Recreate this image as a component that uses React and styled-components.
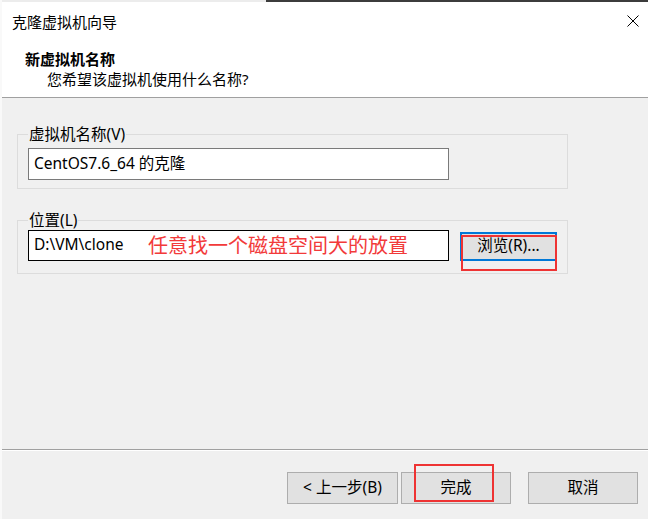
import React from 'react'
import styled, { createGlobalStyle } from 'styled-components'

const Global = createGlobalStyle`
  html, body { margin: 0; padding: 0; }
  body {
    background: #f0f0f0;
    font-family: "Noto Sans", "Noto Sans CJK SC", sans-serif;
    color: #000;
  }
`

const Win = styled.div`
  width: 648px;
  height: 519px;
  display: flex;
  flex-direction: column;
  box-sizing: border-box;
  border-left: 2px solid #f9f9f9;
  overflow: hidden;
`

const TopEdge = styled.div`
  height: 2px;
  margin-left: -2px;
  background: linear-gradient(to right, #ececec 266px, #3c3c3c 266px);
`

const Header = styled.div`
  background: #fff;
  border-bottom: 1px solid #a0a0a0;
  padding-bottom: 8px;
`

const TitleBar = styled.div`
  height: 38px;
  display: flex;
  align-items: center;
  justify-content: space-between;
  padding: 0 8px 0 10px;
  font-size: 15px;
`

const CloseBtn = styled.div`
  width: 12px;
  height: 12px;
  display: flex;
  margin-right: 1px;
`

const HeadTitle = styled.div`
  font-size: 15px;
  line-height: 20px;
  font-weight: 700;
  padding: 9px 0 0 23px;
`

const HeadSub = styled.div`
  font-size: 15px;
  line-height: 20px;
  padding-left: 45px;
`

const Body = styled.div`
  flex: 1;
  padding: 26px 0 0 15px;
  display: flex;
  flex-direction: column;
  gap: 21px;
`

const Group = styled.fieldset`
  margin: 0;
  width: 551px;
  box-sizing: border-box;
  border: 1px solid #dcdcdc;
  padding: ${p => p.$pad};
  padding-left: 10px;
  padding-right: 10px;
  min-width: 0;
`

const Legend = styled.legend`
  font-size: 15.5px;
  line-height: 20px;
  padding: 0 1px;
`

const Row = styled.div`
  display: flex;
  align-items: center;
  gap: 11px;
`

const Field = styled.div`
  position: relative;
  width: 421px;
  height: ${p => p.$h}px;
  box-sizing: border-box;
  border: 1px solid ${p => p.$dark ? '#000' : '#7a7a7a'};
  background: #fff;
  font-size: 15.5px;
  display: flex;
  align-items: center;
  padding: 0 0 4px 5px;
`

const Note = styled.span`
  position: absolute;
  left: 119px;
  top: 0;
  bottom: 3px;
  display: flex;
  align-items: center;
  color: #f23a3a;
  font-size: 20px;
  white-space: nowrap;
`

const BtnWrap = styled.div`
  position: relative;
  margin-top: ${p => p.$mt || 0}px;
`

const Button = styled.div`
  width: ${p => p.$w}px;
  height: ${p => p.$h}px;
  box-sizing: border-box;
  background: #e1e1e1;
  border: ${p => p.$focus ? '2px solid #0078d7' : '1px solid #adadad'};
  display: flex;
  align-items: center;
  justify-content: center;
  font-size: 15.5px;
  padding-bottom: 3px;
`

const Mark = styled.div`
  position: absolute;
  left: ${p => p.$l}px;
  top: ${p => p.$t}px;
  width: ${p => p.$w}px;
  height: ${p => p.$h}px;
  box-sizing: border-box;
  border: 2px solid #ee3333;
  pointer-events: none;
`

const Footer = styled.div`
  height: 70px;
  border-top: 1px solid #a0a0a0;
  box-shadow: inset 0 1px 0 #fff;
  display: flex;
  justify-content: flex-end;
  align-items: flex-start;
  padding: 22px 10px 0 0;
  box-sizing: border-box;
`

const BtnGroup = styled.div`
  display: flex;
  gap: 3px;
  margin-right: 17px;
`

const App = () => (
  <>
    <Global />
    <Win>
      <TopEdge />
      <Header>
        <TitleBar>
          <span>克隆虚拟机向导</span>
          <CloseBtn>
            <svg width="12" height="12" viewBox="0 0 12 12">
              <path d="M0.5 0.5 L11.5 11.5 M11.5 0.5 L0.5 11.5" stroke="#000" strokeWidth="1" fill="none" />
            </svg>
          </CloseBtn>
        </TitleBar>
        <HeadTitle>新虚拟机名称</HeadTitle>
        <HeadSub>您希望该虚拟机使用什么名称?</HeadSub>
      </Header>

      <Body>
        <Group $pad="4px 10px 8px">
          <Legend>虚拟机名称(V)</Legend>
          <Field $h={32}>CentOS7.6_64 的克隆</Field>
        </Group>

        <Group $pad="0 10px 12px">
          <Legend>位置(L)</Legend>
          <Row>
            <Field $h={31} $dark>
              D:\VM\clone
              <Note>任意找一个磁盘空间大的放置</Note>
            </Field>
            <BtnWrap $mt={1}>
              <Button $w={97} $h={29} $focus>浏览(R)...</Button>
              <Mark $l={1} $t={3} $w={96} $h={36} />
            </BtnWrap>
          </Row>
        </Group>
      </Body>

      <Footer>
        <BtnGroup>
          <Button $w={111} $h={32}>&lt; 上一步(B)</Button>
          <BtnWrap>
            <Button $w={110} $h={32}>完成</Button>
            <Mark $l={13} $t={-8} $w={80} $h={38} />
          </BtnWrap>
        </BtnGroup>
        <Button $w={110} $h={32}>取消</Button>
      </Footer>
    </Win>
  </>
)

export default App
